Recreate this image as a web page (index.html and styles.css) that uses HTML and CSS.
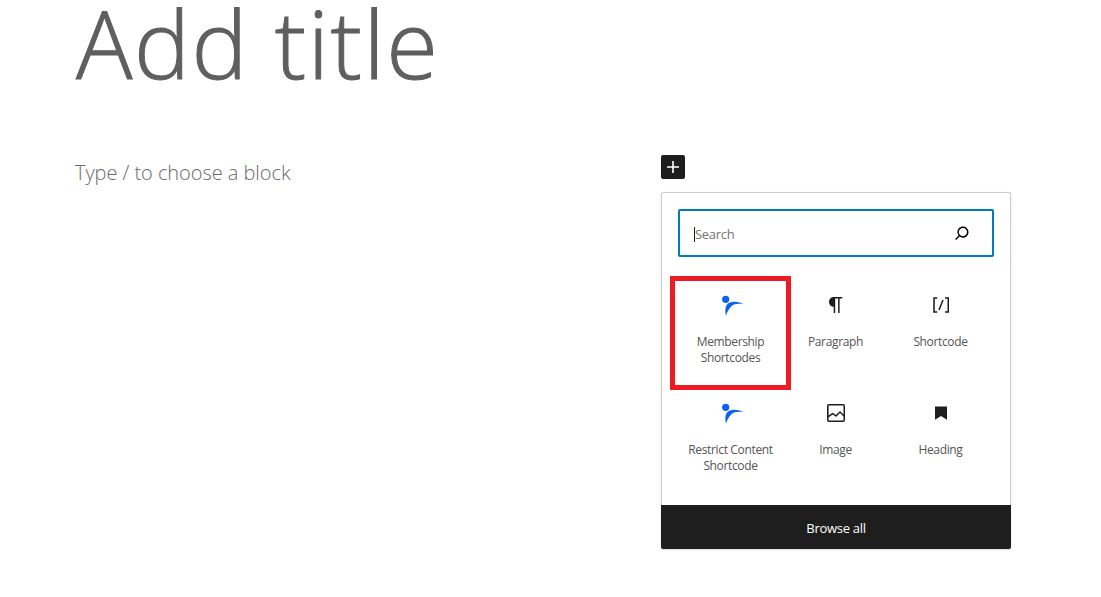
FILE: index.html
```html
<!DOCTYPE html>
<html lang="en">
<head>
    <meta charset="UTF-8">
    <title>Add title</title>
    <link rel="stylesheet" href="styles.css">
</head>
<body>
    <div class="editor">
        <h1 class="post_title">Add title</h1>
        <div class="block_row">
            <p class="block_hint">Type / to choose a block</p>

            <div class="inserter">
                <button class="plus_btn" aria-label="Add block">
                    <svg viewBox="0 0 24 24" width="24" height="24"><path d="M18 11.2h-5.2V6h-1.600v5.200H6v1.600h5.200V18h1.600v-5.200H18z"/></svg>
                </button>

                <div class="panel">
                    <div class="search_wrap">
                        <div class="search_box">
                            <span class="caret"></span>
                            <span class="search_text">Search</span>
                            <svg class="search_icon" viewBox="0 0 24 24" width="24" height="24"><path d="M13 5c-3.300 0-6 2.700-6 6 0 1.400.5 2.700 1.300 3.700l-3.800 3.800 1.100 1.100 3.800-3.800c1 .8 2.300 1.300 3.700 1.300 3.300 0 6-2.700 6-6S16.300 5 13 5zm0 10.500c-2.500 0-4.500-2-4.500-4.500s2-4.500 4.500-4.500 4.500 2 4.500 4.500-2 4.500-4.500 4.500z"/></svg>
                        </div>
                    </div>

                    <div class="block_grid">
                        <div class="block_item">
                            <span class="highlight"></span>
                            <svg viewBox="0 0 24 24" width="24" height="24"><circle class="brand" cx="6.700" cy="6.300" r="3.600"/><path class="brand" d="M7 22.700C5.500 17 6.500 12 9.300 10.300c2.700-1.800 9.700-2.500 15 1-4.800-1-9.300-.5-11.600 1.700C10 15.500 8 19 7 22.700z"/></svg>
                            <span class="block_name">Membership Shortcodes</span>
                        </div>
                        <div class="block_item">
                            <svg viewBox="0 0 24 24" width="24" height="24"><path d="M18.300 4H9.900v-.1l-.9.2c-2.300.4-4 2.400-4 4.800s1.700 4.400 4 4.800l.7.1V20h1.500V5.500h2.900V20h1.500V5.500h2.700V4z"/></svg>
                            <span class="block_name">Paragraph</span>
                        </div>
                        <div class="block_item">
                            <svg viewBox="0 0 24 24" width="24" height="24"><path d="M16 4.200v1.500h2.500v12.500H16v1.500h4V4.200h-4zM4.200 19.800h4v-1.500H5.800V5.800h2.500V4.200h-4l-.1 15.600zm5.100-3.100l1.400.6 4-10-1.400-.6-4 10z"/></svg>
                            <span class="block_name">Shortcode</span>
                        </div>
                        <div class="block_item">
                            <svg viewBox="0 0 24 24" width="24" height="24"><circle class="brand" cx="6.700" cy="6.300" r="3.600"/><path class="brand" d="M7 22.700C5.500 17 6.500 12 9.300 10.300c2.700-1.800 9.700-2.500 15 1-4.800-1-9.300-.5-11.600 1.700C10 15.500 8 19 7 22.700z"/></svg>
                            <span class="block_name">Restrict Content Shortcode</span>
                        </div>
                        <div class="block_item">
                            <svg viewBox="0 0 24 24" width="24" height="24"><path d="M19 3H5c-1.100 0-2 .9-2 2v14c0 1.100.9 2 2 2h14c1.100 0 2-.9 2-2V5c0-1.100-.9-2-2-2zM5 4.500h14c.3 0 .5.2.5.5v8.400l-3-2.900c-.3-.3-.8-.3-1 0L11.900 14 9 12c-.3-.2-.6-.2-.8 0l-3.600 2.600V5c-.1-.3.1-.5.4-.5zm14 15H5c-.3 0-.5-.2-.5-.5v-2.400l4.100-3 3 1.900c.3.2.7.2.9-.1L16 12l3.500 3.400V19c0 .3-.2.500-.5.500z"/></svg>
                            <span class="block_name">Image</span>
                        </div>
                        <div class="block_item">
                            <svg viewBox="0 0 24 24" width="24" height="24"><path d="M6 5.500h12v13.300l-6-3.800-6 3.800z"/></svg>
                            <span class="block_name">Heading</span>
                        </div>
                    </div>

                    <div class="browse_all">Browse all</div>
                </div>
            </div>
        </div>
    </div>
</body>
</html>
```

FILE: styles.css
```css
/*tag*/
body{
    margin: 0;
    height: 597px;
    overflow: hidden;
    background: #fff;
    font-family: "Open Sans", "Noto Sans", sans-serif;
    color: #1e1e1e;
}

/*title area*/
.editor{
    padding-left: 75px;
}
.post_title{
    margin: 0 0 0 1px;
    height: 155px;
    font-size: 94px;
    line-height: 86px;
    letter-spacing: 1.5px;
    font-weight: 300;
    -webkit-text-stroke: 1px #5f5f5f;
    color: #5f5f5f;
}
.block_row{
    display: flex;
}
.block_hint{
    width: 586px;
    margin: 5px 0 0;
    font-size: 20px;
    line-height: 26px;
    font-weight: 300;
    letter-spacing: -0.05px;
    color: #6a6a6a;
}

/*inserter*/
.plus_btn{
    display: block;
    width: 24px;
    height: 24px;
    padding: 0;
    border: 0;
    border-radius: 2px;
    background: #1e1e1e;
}
.plus_btn svg{
    display: block;
    fill: #fff;
}
.panel{
    box-sizing: border-box;
    width: 350px;
    height: 357px;
    margin-top: 13px;
    display: flex;
    flex-direction: column;
    border: 1px solid #ccc;
    border-bottom: 0;
    border-radius: 2px;
    box-shadow: 0 1px 2px rgba(0, 0, 0, 0.15);
}
.search_wrap{
    padding: 16px 16px 0;
}
.search_box{
    box-sizing: border-box;
    height: 48px;
    display: flex;
    align-items: center;
    padding: 2px 19px 0 14px;
    border: 2px solid #007cba;
    border-radius: 2px;
    font-size: 13px;
    letter-spacing: -0.3px;
    color: #757575;
}
.caret{
    width: 1px;
    height: 15px;
    background: #1e1e1e;
}
.search_text{
    flex: 1;
}
.search_icon{
    width: 22px;
    height: 22px;
    margin-top: -2px;
}

/*blocks*/
.block_grid{
    display: grid;
    grid-template-columns: repeat(3, 105px);
    grid-template-rows: 108px 104px;
    padding: 36px 16px 0;
}
.block_item{
    position: relative;
    display: flex;
    flex-direction: column;
    align-items: center;
    text-align: center;
}
.block_item svg{
    fill: #1e1e1e;
}
.block_item svg .brand{
    fill: #0c62f0;
}
.block_name{
    width: 92px;
    margin-top: 17px;
    font-size: 12px;
    line-height: 16px;
    letter-spacing: -0.35px;
    color: #555;
}
.highlight{
    position: absolute;
    top: -17px;
    left: -8px;
    width: 121px;
    height: 114px;
    box-sizing: border-box;
    border: 5px solid #ed1c24;
}
.browse_all{
    height: 44px;
    margin: 0 -1px;
    line-height: 46px;
    text-align: center;
    font-size: 13px;
    font-weight: 500;
    letter-spacing: -0.3px;
    color: #fff;
    background: #1e1e1e;
    border-radius: 0 0 2px 2px;
}
```
